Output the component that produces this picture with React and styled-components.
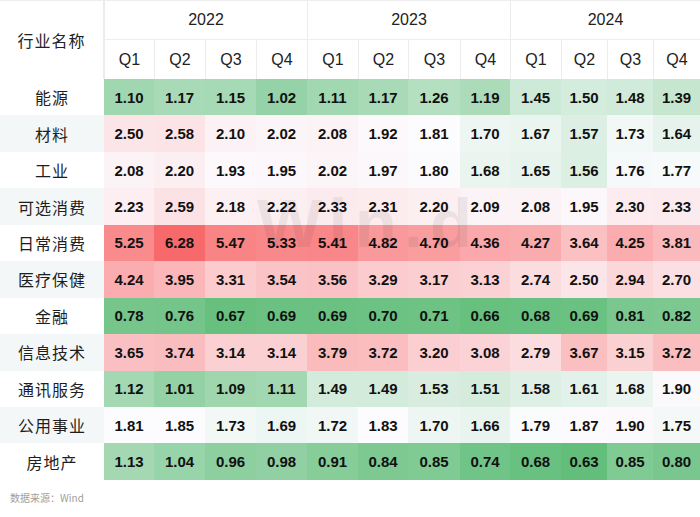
import React from "react";
import styled, { createGlobalStyle } from "styled-components";

const GlobalStyle = createGlobalStyle`
  html, body { margin: 0; padding: 0; background: #ffffff; }
  body { font-family: "Liberation Sans", Arial, sans-serif; }
  * { box-sizing: border-box; }
`;

const YEARS = ["2022", "2023", "2024"];
const QUARTERS = ["Q1", "Q2", "Q3", "Q4"];

const ROWS = [
  ["能源", [1.1, 1.17, 1.15, 1.02, 1.11, 1.17, 1.26, 1.19, 1.45, 1.5, 1.48, 1.39]],
  ["材料", [2.5, 2.58, 2.1, 2.02, 2.08, 1.92, 1.81, 1.7, 1.67, 1.57, 1.73, 1.64]],
  ["工业", [2.08, 2.2, 1.93, 1.95, 2.02, 1.97, 1.8, 1.68, 1.65, 1.56, 1.76, 1.77]],
  ["可选消费", [2.23, 2.59, 2.18, 2.22, 2.33, 2.31, 2.2, 2.09, 2.08, 1.95, 2.3, 2.33]],
  ["日常消费", [5.25, 6.28, 5.47, 5.33, 5.41, 4.82, 4.7, 4.36, 4.27, 3.64, 4.25, 3.81]],
  ["医疗保健", [4.24, 3.95, 3.31, 3.54, 3.56, 3.29, 3.17, 3.13, 2.74, 2.5, 2.94, 2.7]],
  ["金融", [0.78, 0.76, 0.67, 0.69, 0.69, 0.7, 0.71, 0.66, 0.68, 0.69, 0.81, 0.82]],
  ["信息技术", [3.65, 3.74, 3.14, 3.14, 3.79, 3.72, 3.2, 3.08, 2.79, 3.67, 3.15, 3.72]],
  ["通讯服务", [1.12, 1.01, 1.09, 1.11, 1.49, 1.49, 1.53, 1.51, 1.58, 1.61, 1.68, 1.9]],
  ["公用事业", [1.81, 1.85, 1.73, 1.69, 1.72, 1.83, 1.7, 1.66, 1.79, 1.87, 1.9, 1.75]],
  ["房地产", [1.13, 1.04, 0.96, 0.98, 0.91, 0.84, 0.85, 0.74, 0.68, 0.63, 0.85, 0.8]],
];

const ALL = ROWS.flatMap((r) => r[1]);
const SORTED = [...ALL].sort((a, b) => a - b);
const MIN = SORTED[0];
const MAX = SORTED[SORTED.length - 1];
const MID = (() => {
  const n = SORTED.length;
  return n % 2 ? SORTED[(n - 1) / 2] : (SORTED[n / 2 - 1] + SORTED[n / 2]) / 2;
})();

const GREEN = [99, 190, 123];
const WHITE = [252, 252, 255];
const RED = [248, 105, 107];

const lerp = (a, b, t) => a.map((v, i) => Math.round(v + (b[i] - v) * t));

function scaleColor(v) {
  let c;
  if (v <= MID) {
    const t = (v - MIN) / (MID - MIN);
    c = lerp(GREEN, WHITE, t);
  } else {
    const t = (v - MID) / (MAX - MID);
    c = lerp(WHITE, RED, t);
  }
  return `rgb(${c[0]}, ${c[1]}, ${c[2]})`;
}

const Page = styled.div`
  width: 700px;
  height: 517px;
  display: flex;
  flex-direction: column;
  background: #ffffff;
  overflow: hidden;
`;

const TableWrap = styled.div`
  position: relative;
`;

const Table = styled.div`
  display: grid;
  grid-template-columns: 104px 50px 51px 51px 51px 51px 50px 52px 50px 51px 46px 46px 47px;
  grid-template-rows: 39px 40px repeat(11, 36.45px);
`;

const HeadBase = styled.div`
  display: flex;
  align-items: center;
  justify-content: center;
  background: #ffffff;
  color: #222222;
  border-top: 1px solid #eeeeee;
`;

const CornerCell = styled(HeadBase)`
  grid-row: 1 / span 2;
  grid-column: 1;
  border-right: 1px solid #ececec;
  font-family: "Noto Sans CJK SC", "Liberation Sans", sans-serif;
  font-size: 16px;
  letter-spacing: 1px;
`;

const YearCell = styled(HeadBase)`
  grid-column: span 4;
  font-size: 16px;
  border-left: 1px solid #ececec;
`;

const QuarterCell = styled(HeadBase)`
  font-size: 16px;
  border-left: 1px solid #ececec;
`;

const LabelCell = styled.div`
  display: flex;
  align-items: center;
  justify-content: center;
  background: ${(p) => (p.$alt ? "#f3f7f8" : "#ffffff")};
  font-family: "Noto Sans CJK SC", "Liberation Sans", sans-serif;
  font-size: 16px;
  letter-spacing: 1px;
  color: #1e1e1e;
`;

const ValueCell = styled.div`
  display: flex;
  align-items: center;
  justify-content: center;
  font-family: "Liberation Sans", Arial, sans-serif;
  font-weight: 700;
  font-size: 15px;
  color: #111111;
`;

const Watermark = styled.div`
  position: absolute;
  left: 257px;
  top: 189px;
  font-family: "Liberation Sans", Arial, sans-serif;
  font-weight: 700;
  font-size: 69px;
  line-height: 1;
  letter-spacing: 7px;
  color: rgba(0, 0, 0, 0.06);
  pointer-events: none;
  user-select: none;
`;

const Footer = styled.div`
  padding: 10px 0 0 10px;
  font-family: "Noto Sans CJK SC", "Liberation Sans", sans-serif;
  font-size: 10px;
  color: #a0a0a0;
`;

export default function App() {
  return (
    <>
      <GlobalStyle />
      <Page>
        <TableWrap>
          <Table>
            <CornerCell>行业名称</CornerCell>
            {YEARS.map((y) => (
              <YearCell key={y}>{y}</YearCell>
            ))}
            {YEARS.flatMap((y) =>
              QUARTERS.map((q) => <QuarterCell key={y + q}>{q}</QuarterCell>)
            )}
            {ROWS.map(([name, vals], ri) => (
              <React.Fragment key={name}>
                <LabelCell $alt={ri % 2 === 1}>{name}</LabelCell>
                {vals.map((v, ci) => (
                  <ValueCell key={ci} style={{ background: scaleColor(v) }}>
                    {v.toFixed(2)}
                  </ValueCell>
                ))}
              </React.Fragment>
            ))}
          </Table>
          <Watermark aria-hidden="true">Win.d</Watermark>
        </TableWrap>
        <Footer>数据来源：Wind</Footer>
      </Page>
    </>
  );
}
